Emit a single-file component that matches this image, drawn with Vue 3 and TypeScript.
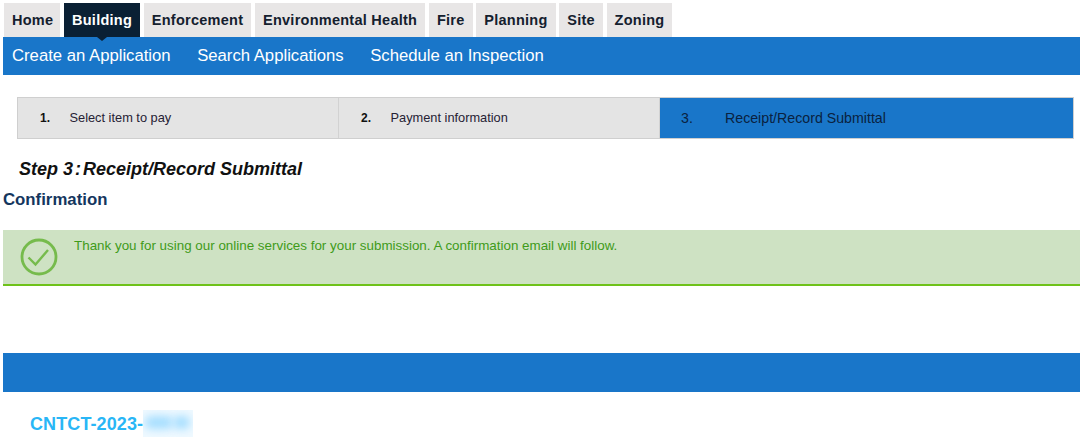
<script setup lang="ts">
const tabs = ['Home', 'Building', 'Enforcement', 'Environmental Health', 'Fire', 'Planning', 'Site', 'Zoning']
const subLinks = ['Create an Application', 'Search Applications', 'Schedule an Inspection']
const steps = [
  { num: '1.', label: 'Select item to pay' },
  { num: '2.', label: 'Payment information' },
  { num: '3.', label: 'Receipt/Record Submittal', active: true },
]
</script>

<template>
  <div class="page">
    <nav class="tabs">
      <a v-for="tab in tabs" :key="tab" class="tab" :class="{ current: tab === 'Building' }">{{ tab }}</a>
    </nav>
    <div class="subnav">
      <a v-for="link in subLinks" :key="link" class="sublink">{{ link }}</a>
    </div>

    <ol class="steps">
      <li v-for="step in steps" :key="step.num" class="step" :class="{ active: step.active }">
        <span class="num">{{ step.num }}</span>
        <span class="label">{{ step.label }}</span>
      </li>
    </ol>

    <h2 class="title"><span>Step 3</span><span class="colon">:</span><span>Receipt/Record Submittal</span></h2>
    <h3 class="confirm">Confirmation</h3>

    <div class="notice">
      <svg class="check" width="38" height="38" viewBox="0 0 38 38" fill="none">
        <circle cx="19" cy="19" r="17" stroke="#76bb4c" stroke-width="2.800" />
        <path d="M8.500 19.500 L15.500 26.500 L28 12" stroke="#76bb4c" stroke-width="2.400" />
      </svg>
      <p>Thank you for using our online services for your submission. A confirmation email will follow.</p>
    </div>

    <div class="band"></div>

    <div class="record">
      <span>CNTCT-2023-</span>
      <span class="redacted"><i></i><i></i></span>
    </div>
  </div>
</template>

<style>
html,
body {
  margin: 0;
  background: #fff;
  overflow: hidden;
}
</style>

<style scoped>
.page {
  width: 1080px;
  height: 437px;
  overflow: hidden;
  font-family: 'Liberation Sans', Arial, sans-serif;
}

.tabs {
  display: flex;
  gap: 3.7px;
  height: 34px;
  padding: 3px 0 0 4px;
}

.tab {
  display: block;
  padding: 0 8px;
  line-height: 34px;
  background: #e8e6e6;
  color: #14202e;
  font-size: 14.5px;
  font-weight: 700;
  letter-spacing: 0.26px;
}

.tab:first-child {
  padding-right: 7px;
}

.tab.current {
  position: relative;
  background: #0a2034;
  color: #fff;
}

.tab.current::after {
  content: '';
  position: absolute;
  left: 50%;
  bottom: -4px;
  margin-left: -5px;
  border-left: 5px solid transparent;
  border-right: 5px solid transparent;
  border-top: 4px solid #0a2034;
}

.subnav {
  display: flex;
  gap: 26.5px;
  height: 38px;
  margin-left: 3px;
  padding-left: 9px;
  background: #1976c9;
}

.sublink {
  color: #fff;
  font-size: 16.7px;
  line-height: 37px;
}

.steps {
  display: grid;
  grid-template-columns: 321px 321px 1fr;
  height: 40px;
  margin: 22px 6px 0 17px;
  padding: 0;
  list-style: none;
  border: 1px solid #cfcfcf;
  background: #e4e4e4;
}

.step {
  display: flex;
  align-items: center;
  padding-left: 22px;
  font-size: 12.8px;
  color: #262234;
  border-right: 1px solid #d2d2d2;
}

.step:last-child {
  border-right: 0;
}

.step .num {
  width: 29.500px;
  font-size: 12px;
  font-weight: 700;
  color: #111;
}

.step .label {
  margin-top: -1px;
}

.step.active {
  padding-left: 21px;
  background: #1976c9;
  font-size: 14.2px;
  color: #0a2240;
}

.step.active .num {
  width: 44px;
  font-size: 14.2px;
  font-weight: 400;
  color: #0a2240;
}

.step.active .label {
  margin-top: 0;
}

.title {
  display: flex;
  margin: 20px 0 0 19px;
  font-size: 18px;
  line-height: 21px;
  font-style: italic;
  font-weight: 700;
  color: #111;
}

.title .colon {
  margin: 0 2px 0 2px;
}

.confirm {
  margin: 10px 0 0 3px;
  font-size: 16.8px;
  line-height: 20px;
  font-weight: 700;
  color: #14365e;
}

.notice {
  display: flex;
  height: 54px;
  margin: 20px 0 0 3px;
  padding: 0;
  background: #cee2c3;
  border-bottom: 2px solid #6fc21a;
  color: #3f9b1a;
  font-size: 13.4px;
}

.check {
  flex: none;
  margin: 8px 0 0 17px;
}

.notice p {
  margin: 8px 0 0 16px;
  line-height: 15px;
}

.band {
  height: 39px;
  margin: 67px 0 0 3px;
  background: #1976c9;
}

.record {
  display: flex;
  margin: 21px 0 0 30px;
  height: 22px;
  font-size: 18px;
  line-height: 22px;
  font-weight: 700;
  color: #29b6f6;
  letter-spacing: 0.1px;
}

.redacted {
  position: relative;
  display: block;
  width: 50px;
  height: 27px;
  margin-top: -3px;
  background: #eff9ff;
  overflow: hidden;
}

.redacted i {
  position: absolute;
  top: 6px;
  height: 13px;
  background: #a6deff;
  border-radius: 6px;
  filter: blur(4px);
}

.redacted i:first-child {
  left: 2px;
  width: 28px;
}

.redacted i:last-child {
  left: 30px;
  width: 17px;
}
</style>
